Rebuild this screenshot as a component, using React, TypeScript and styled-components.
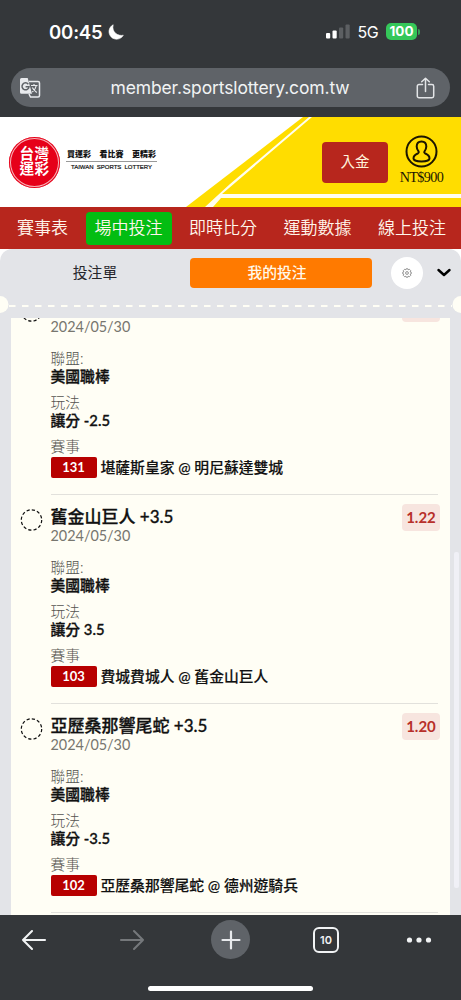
import React from 'react';
import styled, { createGlobalStyle } from 'styled-components';

const GlobalStyle = createGlobalStyle`
  * { box-sizing: border-box; }
  body { margin: 0; background: #fff; }
`;

const cjk = `Lato, 'Noto Sans CJK TC', sans-serif`;
const system = `Inter, 'Noto Sans CJK TC', sans-serif`;

const Screen = styled.div`
  width: 461px;
  height: 1000px;
  overflow: hidden;
  display: flex;
  flex-direction: column;
  font-family: ${cjk};
  white-space: nowrap;
`;

const BrowserTop = styled.header`
  height: 117px;
  flex: none;
  background: #34373a;
  font-family: ${system};
  color: #fff;
  padding: 0 11px;
`;

const StatusBar = styled.div`
  height: 68px;
  display: flex;
  align-items: center;
  justify-content: space-between;
  padding: 0 30px 5px 38px;
`;

const Clock = styled.div`
  display: flex;
  align-items: center;
  gap: 5px;
  font-size: 18.6px;
  font-weight: 600;
  letter-spacing: -0.2px;
`;

const StatusRight = styled.div`
  display: flex;
  align-items: center;
  font-size: 16px;
  font-weight: 400;
`;

const Network = styled.span`
  margin-left: 8px;
  letter-spacing: -0.6px;
`;

const Battery = styled.span`
  margin-left: 8px;
  width: 31px;
  height: 17px;
  border-radius: 5px;
  background: #35c759;
  font-size: 13.5px;
  font-weight: 700;
  line-height: 17px;
  text-align: center;
`;

const BatteryTip = styled.span`
  width: 2px;
  height: 6px;
  margin-left: 1px;
  border-radius: 0 2px 2px 0;
  background: #35a152;
`;

const AddressBar = styled.div`
  height: 39px;
  border-radius: 20px;
  background: #5f6368;
  display: flex;
  align-items: center;
  justify-content: space-between;
  padding: 0 15px 0 8px;
`;

const Address = styled.span`
  margin-left: 3px;
  font-size: 17.5px;
  letter-spacing: -0.12px;
  color: #f1f3f4;
`;

const SiteHeader = styled.div`
  height: 90px;
  flex: none;
  position: relative;
  display: flex;
  align-items: center;
  background: #fff;
`;

const HeaderArt = styled.svg`
  position: absolute;
  inset: 0;
`;

const Logo = styled.div`
  position: relative;
  width: 51px;
  height: 51px;
  margin-left: 9px;
  border-radius: 50%;
  background: #e60019;
  box-shadow: inset 0 0 0 1px #e60019, inset 0 0 0 2px #f7b5ba;
  color: #fff;
  display: flex;
  flex-direction: column;
  align-items: center;
  justify-content: center;
`;

const LogoLine = styled.span`
  height: 15px;
  font-size: 14.6px;
  font-weight: 700;
  line-height: 14px;
  letter-spacing: 0.4px;
`;

const Slogan = styled.div`
  position: relative;
  margin: 0 0 3px 6px;
  width: 91px;
  text-align: center;
  color: #111;
`;

const SloganMain = styled.div`
  display: flex;
  justify-content: space-between;
  padding: 0 1px 0 1px;
  font-size: 8px;
  font-weight: 900;
  line-height: 13px;
  border-bottom: 1px solid #999;
`;

const SloganSub = styled.div`
  font-family: 'Liberation Sans', sans-serif;
  font-size: 6px;
  line-height: 11px;
  word-spacing: 1.5px;
  -webkit-text-stroke: 0.2px #111;
`;

const DepositButton = styled.button`
  position: relative;
  margin: 0 0 0 165px;
  width: 66px;
  height: 41px;
  border: 0;
  border-radius: 4px;
  background: #b7261d;
  color: #fff3dc;
  font: 400 14.5px/40px ${cjk};
  padding: 0;
`;

const Account = styled.div`
  position: relative;
  width: 67px;
  padding-bottom: 2px;
  display: flex;
  flex-direction: column;
  align-items: center;
  color: #1c1600;
  font: 14.2px/19px 'Liberation Serif', serif;
  letter-spacing: -0.6px;
`;

const Nav = styled.nav`
  height: 42px;
  flex: none;
  display: flex;
  align-items: center;
  justify-content: space-between;
  padding: 0 6px 0 8px;
  background: #b7261d;
`;

const NavItem = styled.a<{ $active?: boolean }>`
  height: 33px;
  padding: 0 9px;
  border-radius: 4px;
  background: ${(p) => (p.$active ? '#03bd12' : 'transparent')};
  color: #fff6ec;
  font-size: 17px;
  font-weight: 350;
  line-height: 32px;
`;

const Slip = styled.section`
  position: relative;
  flex: 1;
  min-height: 0;
  display: flex;
  flex-direction: column;
  background: #e3e4e8;
  border-radius: 12px 12px 0 0;
`;

const Tabs = styled.div`
  height: 47px;
  flex: none;
  display: flex;
  align-items: center;
`;

const Tab = styled.div<{ $active?: boolean }>`
  width: ${(p) => (p.$active ? '182px' : '190px')};
  height: 30px;
  padding-right: ${(p) => (p.$active ? '8px' : '0')};
  border-radius: 4px;
  background: ${(p) => (p.$active ? '#ff7a00' : 'transparent')};
  color: ${(p) => (p.$active ? '#fff8e9' : '#26262c')};
  font-size: 14.8px;
  font-weight: ${(p) => (p.$active ? 500 : 400)};
  line-height: 29px;
  text-align: center;
`;

const Settings = styled.div`
  width: 32px;
  height: 32px;
  margin: 0 14px 0 19px;
  border-radius: 50%;
  background: #fff;
  display: flex;
  align-items: center;
  justify-content: center;
`;

const Perforation = styled.div`
  height: 22px;
  flex: none;
  overflow: hidden;
  display: flex;
  align-items: center;
`;

const Card = styled.div`
  flex: 1;
  min-height: 0;
  overflow: hidden;
  margin: 0 11px 0 10.5px;
  background: #fffef5;
`;

const Bets = styled.div`
  margin-top: -32px;
`;

const Bet = styled.article`
  height: 209px;
  display: flex;
  padding-right: 12px;
`;

const Marker = styled.div`
  width: 40px;
  padding: 14px 0 0 9px;
`;

const BetBody = styled.div`
  flex: 1;
  padding-top: 11px;
  border-bottom: 1px solid #e2e1dc;
`;

const BetHead = styled.div`
  height: 51px;
  display: flex;
  justify-content: space-between;
`;

const BetTitle = styled.div`
  font-size: 17px;
  font-weight: 500;
  -webkit-text-stroke: 0.3px #111;
  line-height: 22px;
  color: #111;
`;

const BetDate = styled.div`
  font-size: 14.4px;
  line-height: 15px;
  color: #77766f;
`;

const Odds = styled.div`
  width: 38px;
  height: 27px;
  margin: -2px -2px 0 0;
  border-radius: 4px;
  background: #f7e5df;
  color: #b7302a;
  font-size: 15px;
  font-weight: 700;
  line-height: 27px;
  text-align: center;
`;

const Field = styled.div`
  margin-bottom: 7px;
`;

const Label = styled.div`
  font-size: 14.7px;
  font-weight: 300;
  line-height: 20px;
  color: #55544f;
`;

const Value = styled.div`
  margin-top: -1px;
  font-size: 14.8px;
  font-weight: 500;
  -webkit-text-stroke: 0.35px #111;
  line-height: 18px;
  color: #111;
`;

const Match = styled.div`
  display: flex;
  align-items: center;
  gap: 4px;
  font-size: 14.8px;
  font-weight: 500;
  line-height: 22px;
  color: #111;
`;

const MatchText = styled.span`
  -webkit-text-stroke: 0.15px #111;
`;

const MatchNo = styled.span`
  width: 46px;
  height: 21px;
  border-radius: 2px;
  background: #b70000;
  color: #fff;
  font-size: 13px;
  font-weight: 700;
  line-height: 21px;
  text-align: center;
`;

const Scrollbar = styled.div`
  position: absolute;
  right: 2px;
  top: 303px;
  width: 5px;
  height: 336px;
  border-radius: 2px;
  background: #f0f0f6;
`;

const BrowserBottom = styled.footer`
  height: 85px;
  flex: none;
  background: #34373a;
  display: flex;
  flex-direction: column;
  align-items: center;
`;

const Tools = styled.div`
  width: 100%;
  height: 49px;
  display: flex;
  align-items: center;
  justify-content: space-between;
  padding: 0 29px 0 21px;
`;

const NewTab = styled.div`
  width: 39px;
  height: 39px;
  margin: 0 -4px 0 4px;
  border-radius: 50%;
  background: #5f6368;
  display: flex;
  align-items: center;
  justify-content: center;
`;

const TabCount = styled.div`
  width: 26px;
  height: 26px;
  border: 2px solid #f1f3f4;
  border-radius: 6px;
  color: #f1f3f4;
  font: 600 11px/22px ${system};
  text-align: center;
`;

const HomeIndicator = styled.div`
  width: 165px;
  height: 5px;
  margin-top: 22px;
  border-radius: 3px;
  background: #fff;
`;

const nav = ['賽事表', '場中投注', '即時比分', '運動數據', '線上投注'];

const bets = [
  { title: '', odds: '', play: '讓分 -2.5', no: '131', match: '堪薩斯皇家 @ 明尼蘇達雙城' },
  { title: '舊金山巨人 +3.5', odds: '1.22', play: '讓分 3.5', no: '103', match: '費城費城人 @ 舊金山巨人' },
  { title: '亞歷桑那響尾蛇 +3.5', odds: '1.20', play: '讓分 -3.5', no: '102', match: '亞歷桑那響尾蛇 @ 德州遊騎兵' },
];

const Moon = () => (
  <svg width="16" height="16" viewBox="0 0 16 16">
    <path d="M5.200.8A7.600 7.600 0 1 0 15.300 11.200C10.500 12.500 3.200 8.500 5.200.8Z" fill="#fff" stroke="#fff" strokeWidth="0.600" strokeLinejoin="round" />
  </svg>
);

const Signal = () => (
  <svg width="24" height="15" viewBox="0 0 24 15">
    <rect x="0" y="9" width="4.200" height="5.500" rx="1" fill="#fff" />
    <rect x="6.500" y="6.500" width="4.200" height="8" rx="1" fill="#fff" />
    <rect x="13" y="3.500" width="4.200" height="11" rx="1" fill="#5c5f62" />
    <rect x="19.500" y="0.500" width="4.200" height="14" rx="1" fill="#5c5f62" />
  </svg>
);

const Translate = () => (
  <svg width="22" height="22" viewBox="0 0 22 22" fill="none">
    <path d="M10 4.500h9a1.500 1.500 0 0 1 1.500 1.500v12.500a1.500 1.500 0 0 1-1.500 1.500h-7.500l-1.500-3" stroke="#e8eaed" strokeWidth="1.500" />
    <path d="M2.500 1h6.200l4.300 15.700H2.500A1.500 1.500 0 0 1 1 15.200V2.500A1.500 1.500 0 0 1 2.500 1Z" fill="#e8eaed" />
    <path d="M9.300 7.200A3.500 3.500 0 1 0 10 9.800H6.600" stroke="#5f6368" strokeWidth="1.500" />
    <path d="M12 8.500h6.500M15 7v1.500M17.300 8.500c-.5 3-2 5-4 6.500M13.300 10.500c1 2 2.500 3.500 4.500 5" stroke="#e8eaed" strokeWidth="1.200" />
  </svg>
);

const Share = () => (
  <svg width="19" height="22" viewBox="0 0 19 22" fill="none" stroke="#e3e5e7" strokeWidth="1.500" strokeLinecap="round" strokeLinejoin="round">
    <path d="M6.500 7.500H3A1.700 1.700 0 0 0 1.300 9.200V19A1.700 1.700 0 0 0 3 20.700h13a1.700 1.700 0 0 0 1.700-1.700V9.200A1.700 1.700 0 0 0 16 7.500h-3.500M9.500 14.500V1.500M5.700 4.800l3.800-3.600 3.800 3.600" />
  </svg>
);

const Person = () => (
  <svg width="33" height="33" viewBox="0 0 33 33" fill="none" stroke="#1c1600" strokeWidth="2">
    <circle cx="16.500" cy="16.500" r="15" />
    <path d="M16.500 6.500c-3.100 0-4.800 2.200-4.800 5 0 2 .7 3.300 1.700 4.700.7 1 .3 1.800-.7 2.300-2.600 1.100-4.200 2.600-4.200 5 0 1.700 3.500 3 8 3s8-1.300 8-3c0-2.400-1.600-3.900-4.200-5-1-.5-1.400-1.300-.7-2.300 1-1.400 1.700-2.700 1.700-4.700 0-2.800-1.700-5-4.800-5Z" />
  </svg>
);

const Gear = () => (
  <svg width="10" height="10" viewBox="0 0 10 10" fill="none" stroke="#666" strokeWidth="0.700">
    <path d="M4.100.8h1.800l.3 1 1.200-.5 1.300 1.300-.5 1.200 1 .3v1.800l-1 .3.500 1.200-1.300 1.300-1.200-.5-.3 1H4.100l-.3-1-1.200.5-1.300-1.300.5-1.200-1-.3V4.100l1-.3-.5-1.200 1.300-1.300 1.200.5Z" />
    <circle cx="5" cy="5" r="1.400" />
  </svg>
);

const Arrow = ({ back }: { back?: boolean }) => (
  <svg width="26" height="22" viewBox="0 0 26 22" fill="none" stroke={back ? '#f1f3f4' : '#75787b'} strokeWidth="2.100" strokeLinecap="round" strokeLinejoin="round">
    <path d={back ? 'M24 11H2M11 2l-9 9 9 9' : 'M2 11h22M15 2l9 9-9 9'} />
  </svg>
);

const ForwardSlot = styled.div`
  display: flex;
  margin: 0 -5px 0 5px;
`;

export default function App() {
  return (
    <Screen>
      <GlobalStyle />
      <BrowserTop>
        <StatusBar>
          <Clock>00:45<Moon /></Clock>
          <StatusRight>
            <Signal />
            <Network>5G</Network>
            <Battery>100</Battery>
            <BatteryTip />
          </StatusRight>
        </StatusBar>
        <AddressBar>
          <Translate />
          <Address>member.sportslottery.com.tw</Address>
          <Share />
        </AddressBar>
      </BrowserTop>

      <SiteHeader>
        <HeaderArt width="461" height="90" viewBox="0 0 461 90">
          <path d="M303 0H461V90H186Z" fill="#ffdd00" />
          <path d="M309 0H312L222 77H461V81H221L213 90H205L230 67Z" fill="#fffef0" />
        </HeaderArt>
        <Logo><LogoLine>台灣</LogoLine><LogoLine>運彩</LogoLine></Logo>
        <Slogan>
          <SloganMain><span>買運彩</span><span>看比賽</span><span>更精彩</span></SloganMain>
          <SloganSub>TAIWAN SPORTS LOTTERY</SloganSub>
        </Slogan>
        <DepositButton>入金</DepositButton>
        <Account><Person />NT$900</Account>
      </SiteHeader>

      <Nav>
        {nav.map((name, i) => <NavItem key={name} $active={i === 1}>{name}</NavItem>)}
      </Nav>

      <Slip>
        <Tabs>
          <Tab>投注單</Tab>
          <Tab $active>我的投注</Tab>
          <Settings><Gear /></Settings>
          <svg width="14" height="9" viewBox="0 0 14 9" fill="none" stroke="#000" strokeWidth="2.400" strokeLinecap="round" strokeLinejoin="round">
            <path d="m1.500 2 5.500 5 5.500-5" />
          </svg>
        </Tabs>
        <Perforation>
          <svg width="461" height="22" viewBox="0 0 461 22">
            <circle cx="0" cy="8.500" r="8.500" fill="#fffef5" />
            <circle cx="461" cy="8.500" r="8.500" fill="#fffef5" />
            <path d="M9 10H452" stroke="#fffef5" strokeWidth="2" strokeDasharray="6.500 6.500" />
          </svg>
        </Perforation>
        <Card>
          <Bets>
            {bets.map((bet) => (
              <Bet key={bet.no}>
                <Marker>
                  <svg width="23" height="23" viewBox="0 0 23 23">
                    <circle cx="11.500" cy="11" r="10.200" fill="none" stroke="#111" strokeWidth="1.200" strokeDasharray="3.200 2.140" />
                  </svg>
                </Marker>
                <BetBody>
                  <BetHead>
                    <div>
                      <BetTitle>{bet.title || '\u00a0'}</BetTitle>
                      <BetDate>2024/05/30</BetDate>
                    </div>
                    <Odds>{bet.odds}</Odds>
                  </BetHead>
                  <Field><Label>聯盟:</Label><Value>美國職棒</Value></Field>
                  <Field><Label>玩法</Label><Value>{bet.play}</Value></Field>
                  <Label>賽事</Label>
                  <Match><MatchNo>{bet.no}</MatchNo><MatchText>{bet.match}</MatchText></Match>
                </BetBody>
              </Bet>
            ))}
          </Bets>
        </Card>
        <Scrollbar />
      </Slip>

      <BrowserBottom>
        <Tools>
          <Arrow back />
          <ForwardSlot><Arrow /></ForwardSlot>
          <NewTab>
            <svg width="20" height="20" viewBox="0 0 20 20" stroke="#e8eaed" strokeWidth="2.200" strokeLinecap="round">
              <path d="M1.500 10h17M10 1.500v17" />
            </svg>
          </NewTab>
          <TabCount>10</TabCount>
          <svg width="26" height="6" viewBox="0 0 26 6" fill="#f1f3f4">
            <circle cx="3.500" cy="3" r="2.600" />
            <circle cx="13" cy="3" r="2.600" />
            <circle cx="22.500" cy="3" r="2.600" />
          </svg>
        </Tools>
        <HomeIndicator />
      </BrowserBottom>
    </Screen>
  );
}
